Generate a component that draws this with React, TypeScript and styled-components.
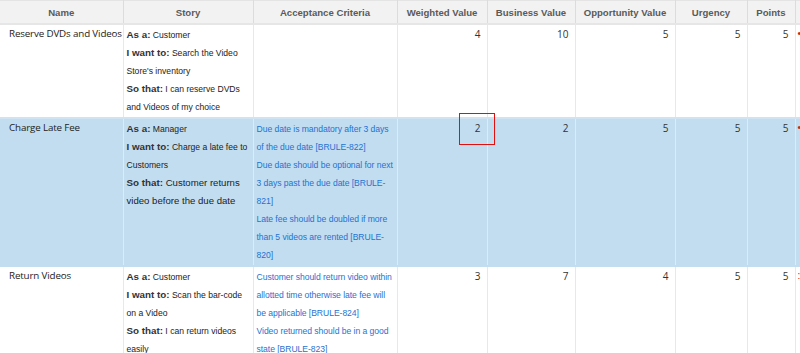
import styled, { createGlobalStyle } from 'styled-components';

const GlobalStyle = createGlobalStyle`
  html, body {
    margin: 0;
    padding: 0;
    background: #ffffff;
    overflow: hidden;
  }
`;

type Story = { role: string; want: string; why: string };

type Row = {
  name: string;
  story: Story;
  criteria: string[];
  weighted: number;
  business: number;
  opportunity: number;
  urgency: number;
  points: number;
  mark: string;
  selected?: boolean;
};

const columns = [
  { title: 'Name', width: 123 },
  { title: 'Story', width: 130 },
  { title: 'Acceptance Criteria', width: 144 },
  { title: 'Weighted Value', width: 90 },
  { title: 'Business Value', width: 88 },
  { title: 'Opportunity Value', width: 100 },
  { title: 'Urgency', width: 72 },
  { title: 'Points', width: 48 },
  { title: '', width: 20 },
];

const rows: Row[] = [
  {
    name: 'Reserve DVDs and Videos',
    story: {
      role: 'Customer',
      want: "Search the Video Store's inventory",
      why: 'I can reserve DVDs and Videos of my choice',
    },
    criteria: [],
    weighted: 4,
    business: 10,
    opportunity: 5,
    urgency: 5,
    points: 5,
    mark: '•',
  },
  {
    name: 'Charge Late Fee',
    story: {
      role: 'Manager',
      want: 'Charge a late fee to Customers',
      why: 'Customer returns video before the due date',
    },
    criteria: [
      'Due date is mandatory after 3 days of the due date [BRULE-822]',
      'Due date should be optional for next 3 days past the due date [BRULE-821]',
      'Late fee should be doubled if more than 5 videos are rented [BRULE-820]',
    ],
    weighted: 2,
    business: 2,
    opportunity: 5,
    urgency: 5,
    points: 5,
    mark: '•',
    selected: true,
  },
  {
    name: 'Return Videos',
    story: {
      role: 'Customer',
      want: 'Scan the bar-code on a Video',
      why: 'I can return videos easily',
    },
    criteria: [
      'Customer should return video within allotted time otherwise late fee will be applicable [BRULE-824]',
      'Video returned should be in a good state [BRULE-823]',
    ],
    weighted: 3,
    business: 7,
    opportunity: 4,
    urgency: 5,
    points: 5,
    mark: ':',
  },
];

const App = () => {
  return (
    <>
      <GlobalStyle />
      <Viewport>
        <Grid>
          <colgroup>
            {columns.map((c, i) => (
              <col key={i} style={{ width: c.width }} />
            ))}
          </colgroup>
          <thead>
            <tr>
              {columns.map((c, i) => (
                <HeadCell key={i}>{c.title}</HeadCell>
              ))}
            </tr>
          </thead>
          <tbody>
            {rows.map((r, i) => (
              <BodyRow key={i} $selected={r.selected}>
                <NameCell>{r.name}</NameCell>
                <TextCell>
                  <Line>
                    <Label>As a:</Label> {r.story.role}
                  </Line>
                  <Line>
                    <Label>I want to:</Label> {r.story.want}
                  </Line>
                  <Line $large={r.selected}>
                    <Label>So that:</Label> {r.story.why}
                  </Line>
                </TextCell>
                <TextCell>
                  {r.criteria.map((c, j) => (
                    <Criterion key={j}>{c}</Criterion>
                  ))}
                </TextCell>
                <NumberCell>
                  {r.weighted}
                  {r.selected && <EditFrame />}
                </NumberCell>
                <NumberCell>{r.business}</NumberCell>
                <NumberCell>{r.opportunity}</NumberCell>
                <NumberCell>{r.urgency}</NumberCell>
                <NumberCell>{r.points}</NumberCell>
                <MarkCell>{r.mark}</MarkCell>
              </BodyRow>
            ))}
          </tbody>
        </Grid>
      </Viewport>
    </>
  );
};

const Viewport = styled.div`
  width: 800px;
  height: 353px;
  overflow: hidden;
`;

const Grid = styled.table`
  table-layout: fixed;
  width: 815px;
  border-collapse: collapse;
  border-spacing: 0;
`;

const HeadCell = styled.th`
  height: 22px;
  padding: 0 2px;
  background: #f2f2f2;
  border-top: 1px solid #e4e4e4;
  border-bottom: 2px solid #e6e6e6;
  border-right: 1px solid #dcdcdc;
  font-family: 'Liberation Sans', Arial, sans-serif;
  font-size: 9.6px;
  font-weight: bold;
  color: #5a5a5a;
  text-align: center;
  white-space: nowrap;
  overflow: hidden;
`;

const BodyRow = styled.tr<{ $selected?: boolean }>`
  background: ${({ $selected }) => ($selected ? '#c2ddf0' : '#ffffff')};

  & > td {
    border-bottom: 2px solid ${({ $selected }) => ($selected ? '#c2ddf0' : '#cfe3f2')};
  }
`;

const Cell = styled.td`
  vertical-align: top;
  border-right: 1px solid #e8e8e8;
  overflow: hidden;
`;

const NameCell = styled(Cell)`
  padding: 1px 2px 0 9px;
  font-family: 'Open Sans', sans-serif;
  font-size: 9.8px;
  line-height: 16px;
  letter-spacing: -0.15px;
  color: #222;
  white-space: nowrap;
`;

const TextCell = styled(Cell)`
  padding: 1px 1px 1px 3px;
  font-family: 'Liberation Sans', Arial, sans-serif;
  font-size: 8.6px;
  line-height: 18px;
  color: #222;
`;

const Line = styled.div<{ $large?: boolean }>`
  font-size: ${({ $large }) => ($large ? '9.6px' : '8.6px')};
`;

const Label = styled.b`
  font-size: 9.8px;
  color: #333;
`;

const Criterion = styled.div`
  color: #1f72d1;
  font-size: 8.6px;
  letter-spacing: -0.05px;
`;

const NumberCell = styled(Cell)`
  position: relative;
  overflow: visible;
  padding: 1px 6px 0 2px;
  font-family: 'Open Sans', sans-serif;
  font-size: 10px;
  line-height: 16px;
  color: #333;
  text-align: right;
`;

const EditFrame = styled.span`
  position: absolute;
  right: -8px;
  top: -6px;
  width: 34px;
  height: 30px;
  border: 1px solid #e01010;
  pointer-events: none;
`;

const MarkCell = styled(Cell)`
  padding: 1px 0 0 2px;
  font-family: 'Liberation Sans', Arial, sans-serif;
  font-size: 10px;
  line-height: 16px;
  color: #d02020;
  border-right: none;
`;

export default App;
